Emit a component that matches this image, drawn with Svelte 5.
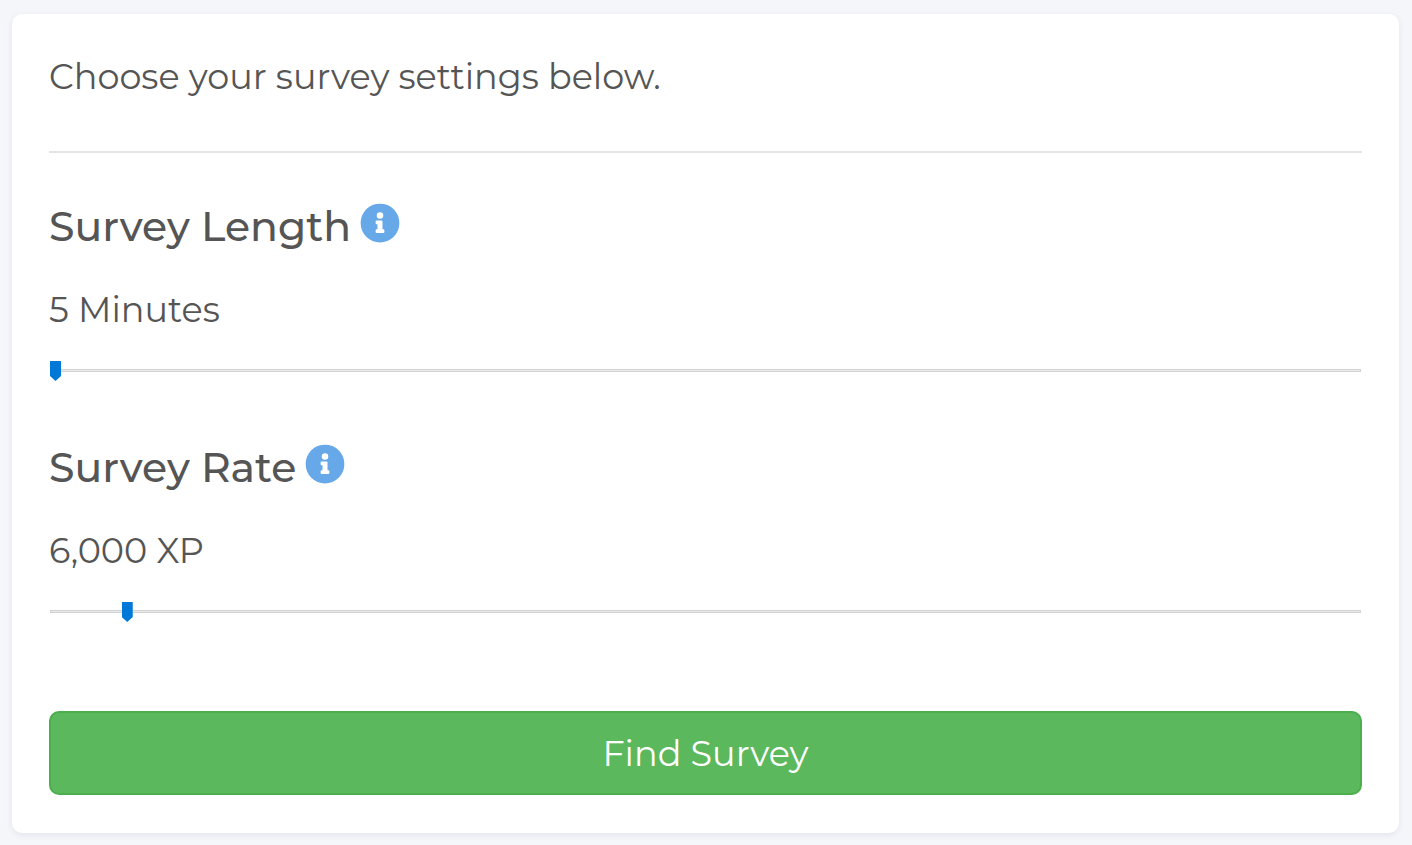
<script lang="ts">
	let minutes = 5;
	let rate = 6000;
</script>

<main class="card">
	<p class="intro">Choose your survey settings below.</p>
	<hr />

	<form on:submit|preventDefault>
		<section class="setting">
			<h2>
				<label for="length">Survey Length</label>
				<svg class="info" viewBox="0 0 512 512" aria-hidden="true">
					<circle cx="256" cy="256" r="248" />
					<path
						d="M256 118a42 42 0 1 1 0 84 42 42 0 0 1 0-84zm56 254c0 7-5 12-12 12h-88c-7 0-12-5-12-12v-24c0-7 5-12 12-12h12v-64h-12c-7 0-12-5-12-12v-24c0-7 5-12 12-12h64c7 0 12 5 12 12v100h12c7 0 12 5 12 12v24z"
					/>
				</svg>
			</h2>
			<p class="value">{minutes} Minutes</p>
			<input id="length" type="range" min="5" max="60" bind:value={minutes} />
		</section>

		<section class="setting">
			<h2>
				<label for="rate">Survey Rate</label>
				<svg class="info" viewBox="0 0 512 512" aria-hidden="true">
					<circle cx="256" cy="256" r="248" />
					<path
						d="M256 118a42 42 0 1 1 0 84 42 42 0 0 1 0-84zm56 254c0 7-5 12-12 12h-88c-7 0-12-5-12-12v-24c0-7 5-12 12-12h12v-64h-12c-7 0-12-5-12-12v-24c0-7 5-12 12-12h64c7 0 12 5 12 12v100h12c7 0 12 5 12 12v24z"
					/>
				</svg>
			</h2>
			<p class="value">{rate.toLocaleString('en-US')} XP</p>
			<input id="rate" type="range" min="500" max="100000" step="500" bind:value={rate} />
		</section>

		<button class="find" type="submit">Find Survey</button>
	</form>
</main>

<style>
	:global(body) {
		background: #f4f6fa;
		overflow-x: hidden;
	}
	:global(#app) {
		display: flow-root;
	}
	.card {
		margin: 14px 13px 12px 12px;
		padding: 38px 37px;
		background: #fff;
		border-radius: 10px;
		box-shadow: 0 2px 6px rgba(40, 40, 80, 0.08);
		color: #555;
		font-family: Montserrat, Inter, sans-serif;
		font-size: 35px;
		line-height: 50px;
	}
	p {
		margin: 0;
	}
	hr {
		height: 2px;
		margin: 49px 0 50px;
		border: 0;
		background: #e4e4e4;
	}
	.setting {
		margin-bottom: 63px;
	}
	h2 {
		display: flex;
		align-items: center;
		gap: 9px;
		margin: 0 0 36px;
		font-size: 41px;
		font-weight: 500;
		line-height: 46px;
	}
	.info {
		width: 40px;
		height: 40px;
		margin-bottom: 6px;
	}
	.info circle {
		fill: #67a8e9;
	}
	.info path {
		fill: #fff;
	}
	input {
		display: block;
		width: calc(100% - 2px);
		height: 21px;
		margin: 25px 1px 0;
		appearance: none;
		background: transparent;
		cursor: pointer;
	}
	input::-webkit-slider-runnable-track {
		box-sizing: border-box;
		height: 3px;
		border: 1px solid #d3d3d3;
		background: #e7eaea;
	}
	input::-webkit-slider-thumb {
		width: 11px;
		height: 20px;
		margin: -9px -1px 0;
		appearance: none;
		background: #0078d7;
		clip-path: polygon(0 0, 100% 0, 100% 75%, 50% 100%, 0 75%);
	}
	.find {
		display: block;
		width: 100%;
		margin-top: 89px;
		padding: 16px 15px 14px;
		border: 2px solid #4cae4c;
		border-radius: 10px;
		background: #5cb85c;
		color: #fff;
		font: inherit;
		cursor: pointer;
	}
</style>
